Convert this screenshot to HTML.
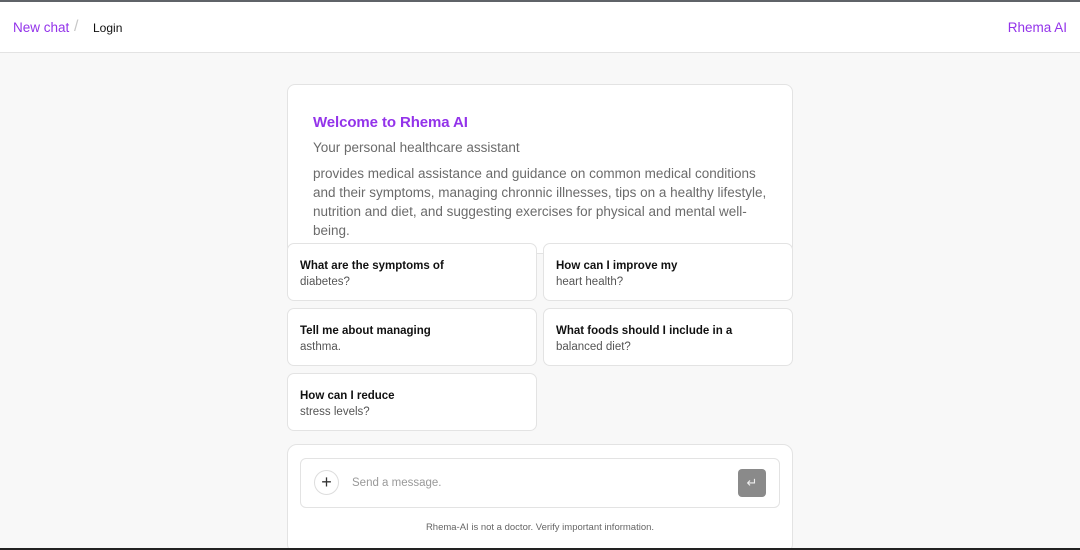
<!DOCTYPE html>
<html style="width:1080px;height:550px;overflow:hidden"><head><meta charset="utf-8"><style>
*{box-sizing:border-box;margin:0;padding:0}
body{width:1080px;height:550px;overflow:hidden;background:#f8f8f8;font-family:"Liberation Sans",sans-serif;position:relative}
.top{position:absolute;left:0;top:0;width:1080px;height:2px;background:#5f6368}
.hdr{position:absolute;left:0;top:2px;width:1080px;height:51px;background:#fff;border-bottom:1px solid #e3e3e3}
.nc{position:absolute;left:13px;top:18px;font-size:13.5px;color:#9333ea}
.sl{position:absolute;left:74px;top:16px;font-size:16px;color:#c8c8c8}
.lg{position:absolute;left:93px;top:19px;font-size:12px;color:#111}
.ra{position:absolute;right:13px;top:18px;font-size:13.5px;color:#9333ea}
.card{position:absolute;left:287px;top:84px;width:506px;height:170px;background:#fff;border:1px solid #e3e3e3;border-radius:8px}
.t1{position:absolute;left:313px;top:114px;font-size:15px;font-weight:bold;color:#9333ea;letter-spacing:-0.1px}
.t2{position:absolute;left:313px;top:140px;font-size:13.5px;color:#6b6b6b}
.t3{position:absolute;left:313px;top:164px;white-space:nowrap;font-size:13.5px;line-height:19px;color:#6b6b6b}
.s{position:absolute;width:250px;height:58px;background:#fff;border:1px solid #e3e3e3;border-radius:7px;padding:14px 12px;font-size:11.5px;line-height:16px;color:#555}
.s b{color:#111;display:block}
.ic{position:absolute;left:287px;top:444px;width:506px;height:110px;background:#fff;border:1px solid #e3e3e3;border-radius:10px}
.in{position:absolute;left:300px;top:458px;width:480px;height:50px;border:1px solid #e3e3e3;border-radius:6px;background:#fff}
.pl{position:absolute;left:314px;top:470px;width:25px;height:25px;border:1px solid #ddd;border-radius:50%;text-align:center;line-height:22px;font-size:18px;color:#333}
.ph{position:absolute;left:352px;top:477px;font-size:11.5px;color:#999}
.bt{position:absolute;left:738px;top:469px;width:28px;height:28px;background:#8a8a8a;border-radius:4px;color:#eee;text-align:center;line-height:28px;font-size:13px}
.ft{position:absolute;left:287px;top:522px;width:506px;text-align:center;font-size:9.5px;color:#666}
.bot{position:absolute;left:0;top:548px;width:1080px;height:2px;background:#222}
</style></head><body>
<div class="top"></div>
<div class="hdr"><span class="nc">New chat</span><span class="sl">/</span><span class="lg">Login</span><span class="ra">Rhema AI</span></div>
<div class="card"></div>
<div class="t1">Welcome to Rhema AI</div>
<div class="t2">Your personal healthcare assistant</div>
<div class="t3">provides medical assistance and guidance on common medical conditions<br>and their symptoms, managing chronnic illnesses, tips on a healthy lifestyle,<br>nutrition and diet, and suggesting exercises for physical and mental well-<br>being.</div>
<div class="s" style="left:287px;top:243px"><b>What are the symptoms of</b>diabetes?</div>
<div class="s" style="left:543px;top:243px"><b>How can I improve my</b>heart health?</div>
<div class="s" style="left:287px;top:308px"><b>Tell me about managing</b>asthma.</div>
<div class="s" style="left:543px;top:308px"><b>What foods should I include in a</b>balanced diet?</div>
<div class="s" style="left:287px;top:373px"><b>How can I reduce</b>stress levels?</div>
<div class="ic"></div>
<div class="in"></div>
<div class="pl">+</div>
<div class="ph">Send a message.</div>
<div class="bt">↵</div>
<div class="ft">Rhema-AI is not a doctor. Verify important information.</div>
<div class="bot"></div>
</body></html>
